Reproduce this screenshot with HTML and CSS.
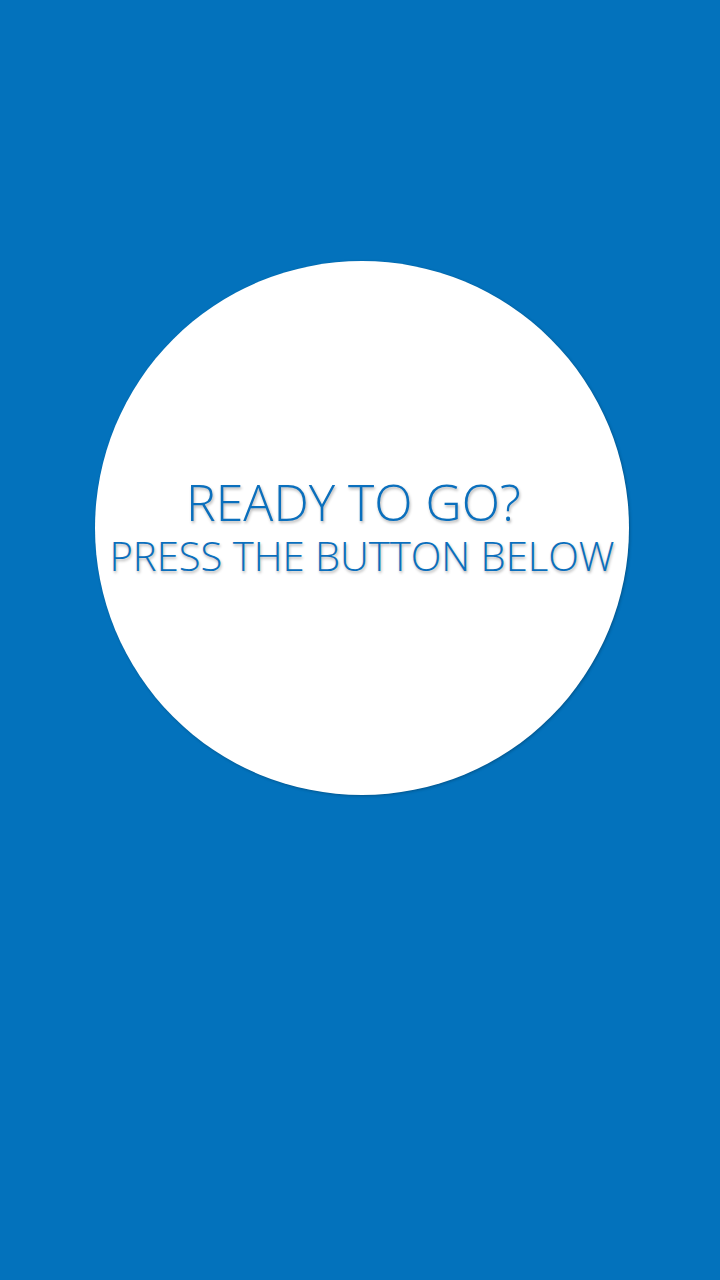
FILE: index.html
```html
<!DOCTYPE html>
<html>
<head>
<meta charset="utf-8">
<link rel="stylesheet" href="styles.css">
</head>
<body>
<main class="screen">
  <div class="circle">
    <div class="msg">
      <div class="line1">READY TO GO?</div>
      <div class="line2">PRESS THE BUTTON BELOW</div>
    </div>
  </div>
</main>
</body>
</html>
```
FILE: styles.css
```css
html, body {
  margin: 0;
  padding: 0;
}
body {
  background: #0372bc;
  font-family: "Open Sans", "Liberation Sans", sans-serif;
}
.screen {
  width: 720px;
  height: 1280px;
  padding-top: 261px;
  padding-left: 95px;
  box-sizing: border-box;
}
.circle {
  width: 534px;
  height: 534px;
  border-radius: 50%;
  background: #ffffff;
  box-shadow: 1px 1px 3px rgba(0, 0, 0, 0.25);
  display: flex;
  align-items: center;
  justify-content: center;
}
.msg {
  text-align: center;
  color: #0a6fbd;
  font-weight: 300;
  text-shadow: 1px 2px 3px rgba(0, 0, 0, 0.3);
  white-space: nowrap;
}
.line1 {
  font-size: 50px;
  line-height: 56px;
  padding-right: 17px;
}
.line2 {
  font-size: 40px;
  line-height: 52px;
}
```
